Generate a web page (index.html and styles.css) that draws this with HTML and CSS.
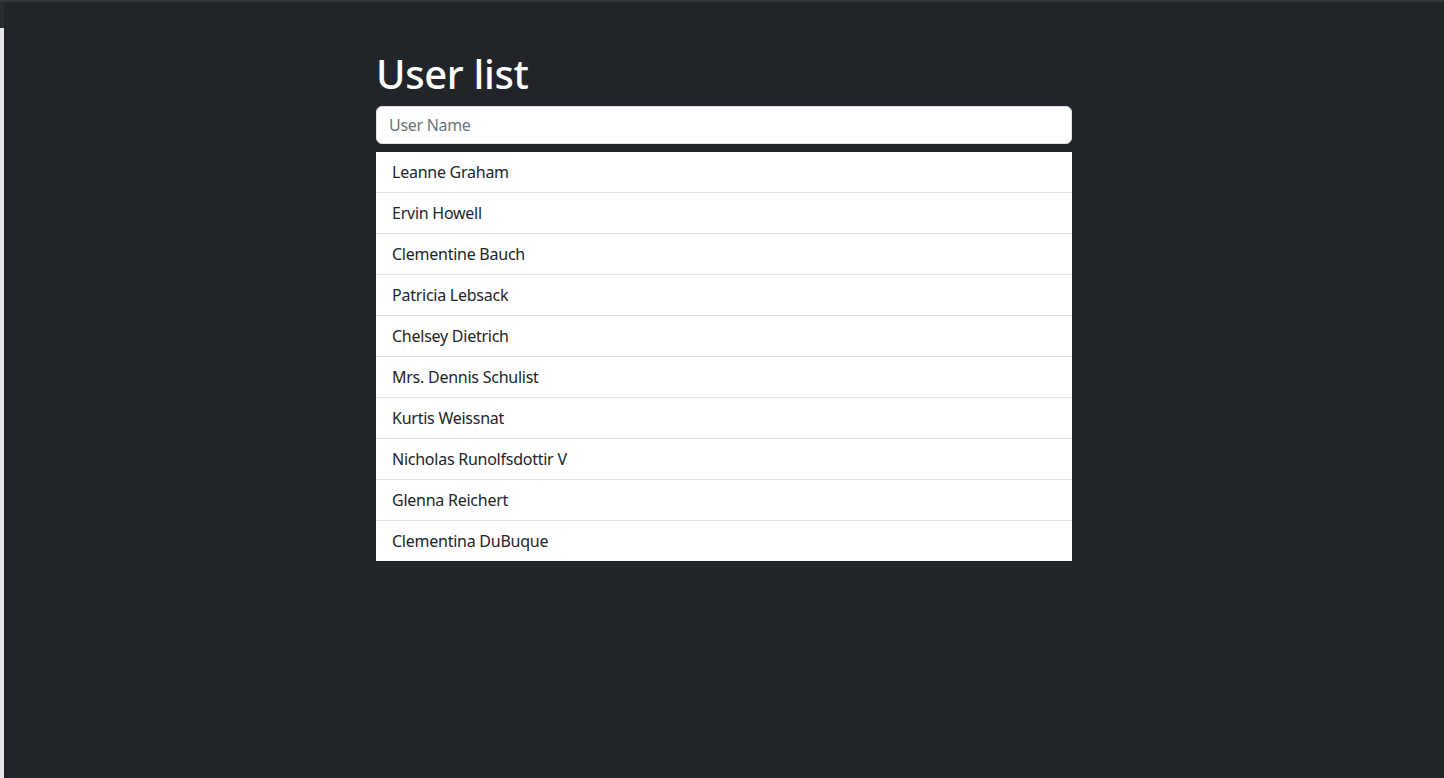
FILE: index.html
```html
<!DOCTYPE html>
<html lang="en">
<head>
<meta charset="utf-8">
<title>User list</title>
<link rel="stylesheet" href="styles.css">
</head>
<body>
<div class="topbar"></div>
<div class="frame">
  <div class="side"><div class="side-dark"></div><div class="side-light"></div></div>
  <main class="main">
    <div class="container">
      <h1 class="title">User list</h1>
      <input class="search" type="text" placeholder="User Name">
      <ul class="users">
        <li>Leanne Graham</li>
        <li>Ervin Howell</li>
        <li>Clementine Bauch</li>
        <li>Patricia Lebsack</li>
        <li>Chelsey Dietrich</li>
        <li>Mrs. Dennis Schulist</li>
        <li>Kurtis Weissnat</li>
        <li>Nicholas Runolfsdottir V</li>
        <li>Glenna Reichert</li>
        <li>Clementina DuBuque</li>
      </ul>
    </div>
  </main>
</div>
</body>
</html>
```
FILE: styles.css
```css
* { box-sizing: border-box; }
html, body { margin: 0; height: 100%; }
body {
  font-family: "Noto Sans", "Open Sans", sans-serif;
  background: #212529;
  display: flex;
  flex-direction: column;
  overflow: hidden;
}
.topbar { height: 2px; background: #34373b; flex: none; }
.frame { flex: 1; display: flex; }
.side { width: 4px; display: flex; flex-direction: column; flex: none; }
.side-dark { height: 26px; background: #2a2c2f; }
.side-light { flex: 1; background: #e6e6e6; }
.main { flex: 1; background: #212529; padding-top: 48px; }
.container { width: 696px; margin: 0 auto; }
.title {
  margin: 0 0 8px;
  font-size: 40px;
  line-height: 48px;
  font-weight: 500;
  letter-spacing: -0.35px;
  color: #fff;
}
.search {
  display: block;
  width: 100%;
  height: 38px;
  padding: 6px 12px;
  font: inherit;
  font-size: 16px;
  letter-spacing: -0.3px;
  color: #212529;
  background: #fff;
  border: 1px solid #dee2e6;
  border-radius: 6px;
  outline: none;
}
.search::placeholder { color: #6c757d; }
.users {
  list-style: none;
  margin: 8px 0 0;
  padding: 0;
  background: #fff;
}
.users li {
  height: 41px;
  padding: 0 16px;
  display: flex;
  align-items: center;
  font-size: 16px;
  letter-spacing: -0.25px;
  color: #212529;
  border-bottom: 1px solid #dee2e6;
}
.users li:last-child { border-bottom: none; height: 40px; }
```
